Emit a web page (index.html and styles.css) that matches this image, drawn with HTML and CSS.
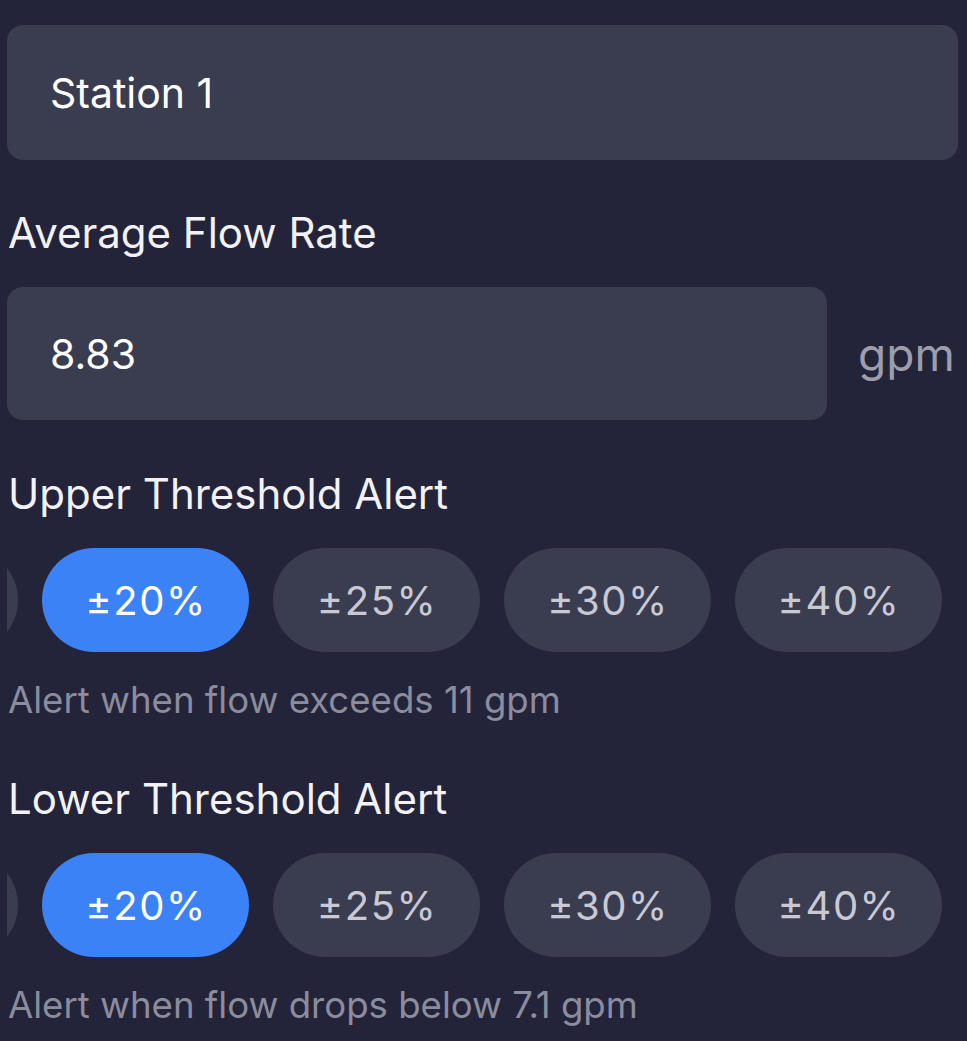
FILE: index.html
```html
<!DOCTYPE html>
<html lang="en">
<head>
<meta charset="utf-8">
<title>Station settings</title>
<link rel="stylesheet" href="styles.css">
</head>
<body>
<main class="form">
  <div class="field field-name">
    <div class="input input-full">Station 1</div>
  </div>

  <div class="field">
    <div class="label label-first">Average Flow Rate</div>
    <div class="input-row">
      <div class="input input-flow">8.83</div>
      <span class="unit">gpm</span>
    </div>
  </div>

  <div class="field">
    <div class="label">Upper Threshold Alert</div>
    <div class="chips">
      <div class="chip-track">
        <button class="chip">±15%</button>
        <button class="chip chip-active">±20%</button>
        <button class="chip">±25%</button>
        <button class="chip">±30%</button>
        <button class="chip">±40%</button>
      </div>
    </div>
    <div class="helper">Alert when flow exceeds 11 gpm</div>
  </div>

  <div class="field">
    <div class="label label-gap">Lower Threshold Alert</div>
    <div class="chips">
      <div class="chip-track">
        <button class="chip">±15%</button>
        <button class="chip chip-active">±20%</button>
        <button class="chip">±25%</button>
        <button class="chip">±30%</button>
        <button class="chip">±40%</button>
      </div>
    </div>
    <div class="helper">Alert when flow drops below 7.1 gpm</div>
  </div>
</main>
</body>
</html>
```

FILE: styles.css
```css
html, body {
  margin: 0;
  padding: 0;
  background: #232439;
  height: 100%;
  overflow: hidden;
}

body {
  font-family: "Inter", "Noto Sans", "Liberation Sans", sans-serif;
  color: #f2f2f6;
}

.form {
  padding: 25px 9px 0 7px;
  display: flex;
  flex-direction: column;
}

.input {
  background: #3a3c50;
  border-radius: 16px;
  display: flex;
  align-items: center;
  padding-left: 43px;
  font-size: 41px;
  color: #ffffff;
  box-sizing: border-box;
}

.input-full {
  height: 135px;
}

.input-row {
  display: flex;
  align-items: center;
  gap: 31px;
}

.input-flow {
  width: 820px;
  height: 133px;
  flex: none;
}

.unit {
  font-size: 46px;
  color: #9d9dab;
  line-height: 1;
  padding-top: 1px;
}

.label {
  font-size: 42px;
  line-height: 48px;
  padding-left: 1px;
  margin-top: 50px;
  margin-bottom: 30px;
  color: #f2f2f6;
}

.label-first {
  margin-top: 49px;
  margin-bottom: 30px;
}

.label-gap {
  margin-top: 53px;
}

.chips {
  overflow: hidden;
  height: 104px;
}

.chip-track {
  display: flex;
  gap: 24px;
  margin-left: -196px;
}

.chip {
  flex: none;
  width: 207px;
  height: 104px;
  border: none;
  border-radius: 52px;
  background: #3a3c50;
  color: #c9c9d3;
  font-family: inherit;
  font-size: 40px;
  letter-spacing: 1.5px;
  padding: 0 0 0 1px;
  display: flex;
  align-items: center;
  justify-content: center;
}

.chip-active {
  background: #3b82f6;
  color: #ffffff;
}

.helper {
  font-size: 36.6px;
  line-height: 44px;
  color: #8b8c9e;
  padding-left: 1px;
  margin-top: 26px;
}
```
